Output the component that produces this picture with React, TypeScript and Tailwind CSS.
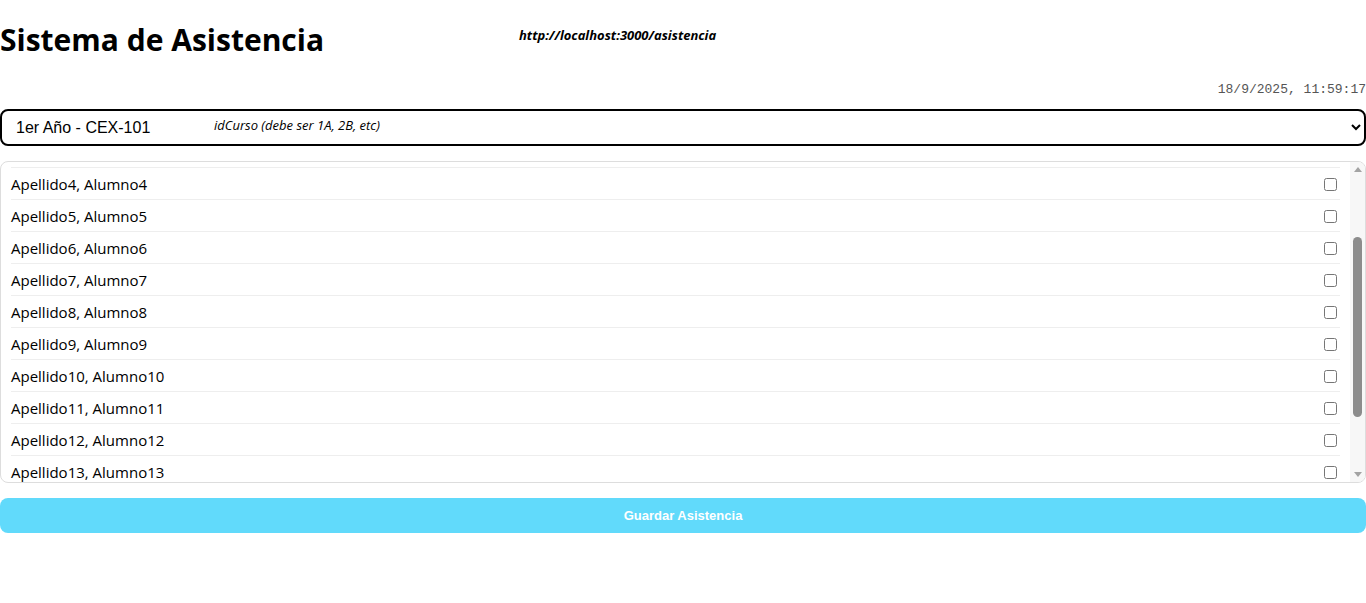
import { useEffect, useRef } from "react";

const alumnos = Array.from({ length: 15 }, (_, i) => `Apellido${i + 1}, Alumno${i + 1}`);

function Scrollbar() {
  return (
    <div className="flex w-[15px] shrink-0 flex-col bg-[#f7f7f7]">
      <div className="flex h-[15px] items-center justify-center">
        <span className="h-0 w-0 border-x-[4px] border-b-[5px] border-x-transparent border-b-[#a3a3a3]" />
      </div>
      <div className="flex-1 px-[3px] pt-[60px]">
        <div className="h-[180px] rounded-full bg-[#8c8c8c]" />
      </div>
      <div className="flex h-[15px] items-center justify-center">
        <span className="h-0 w-0 border-x-[4px] border-t-[5px] border-x-transparent border-t-[#a3a3a3]" />
      </div>
    </div>
  );
}

export default function App() {
  const listRef = useRef<HTMLDivElement>(null);

  useEffect(() => {
    if (listRef.current) listRef.current.scrollTop = 100;
  }, []);

  return (
    <div className="relative min-h-screen bg-white font-['Open_Sans',sans-serif] text-black">
      {/* notas sobre la captura */}
      <span className="absolute left-[519px] top-[27px] text-[13px] font-bold italic leading-[16px]">
        http://localhost:3000/asistencia
      </span>

      <h1 className="pt-[20px] text-[30px] font-bold leading-[40px]">Sistema de Asistencia</h1>

      <div className="mt-[22px] text-right font-['Liberation_Mono',monospace] text-[13px] leading-[16px] text-[#555]">
        18/9/2025, 11:59:17
      </div>

      <div className="relative mt-[11px]">
        <select className="h-[37px] w-full rounded-[8px] border-2 border-black bg-white px-[10px] font-['Liberation_Sans',sans-serif] text-[16px]">
          <option>1er Año - CEX-101</option>
        </select>
        <span className="pointer-events-none absolute left-[214px] top-[8px] text-[13px] italic leading-[16px]">
          idCurso (debe ser 1A, 2B, etc)
        </span>
      </div>

      <div className="mt-[15px] flex h-[322px] overflow-hidden rounded-[8px] border border-[#ddd]">
        <div
          ref={listRef}
          className="flex-1 overflow-y-auto p-[10px] [scrollbar-width:none]"
        >
          {alumnos.map((nombre) => (
            <label key={nombre} className="flex h-8 items-center justify-between border-b border-[#eee] pt-[2px] text-[15px]">
              <span>{nombre}</span>
              <input type="checkbox" className="mr-[3px] h-[13px] w-[13px]" />
            </label>
          ))}
        </div>
        <Scrollbar />
      </div>

      <button
        type="button"
        disabled
        className="mt-[15px] h-[35px] w-full rounded-[8px] bg-[#61dafb] font-['Liberation_Sans',sans-serif] text-[13px] font-bold text-white"
      >
        Guardar Asistencia
      </button>
    </div>
  );
}
